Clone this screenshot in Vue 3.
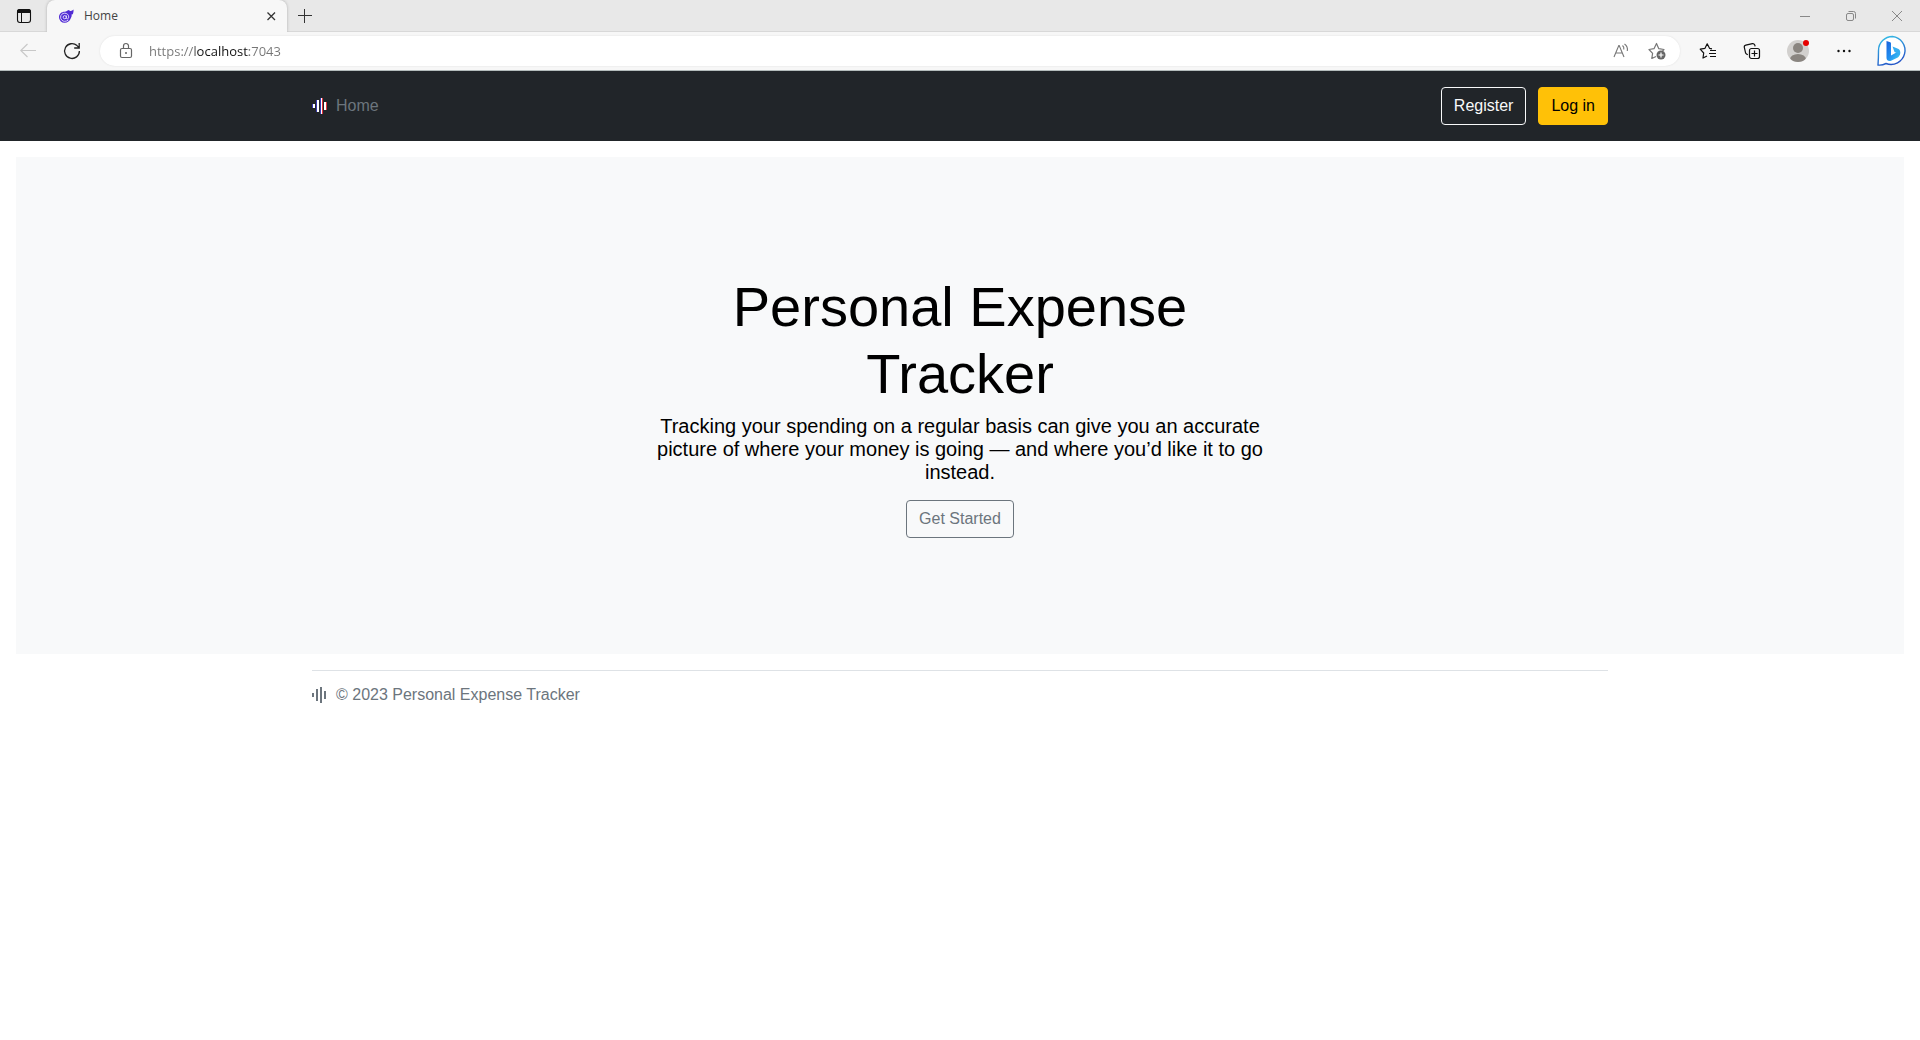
<script setup>
import { ref } from 'vue'

const address = ref('https://localhost:7043')
const year = 2023
const product = 'Personal Expense Tracker'
</script>

<template>
  <div class="window">
    <div class="tab-strip">
      <button class="cell workspace" aria-label="Tab actions">
        <svg width="16" height="16" viewBox="0 0 16 16">
          <rect x="1.500" y="1.500" width="13" height="13" rx="2.500" fill="none" stroke="#111" stroke-width="1.100" />
          <path d="M1 5V3.500A2.500 2.500 0 0 1 3.500 1h9A2.500 2.500 0 0 1 15 3.500V5z" fill="#111" />
          <path d="M5.500 5v9.500" stroke="#111" />
        </svg>
      </button>
      <div class="tab">
        <svg width="16" height="16" viewBox="0 0 16 16">
          <path d="M15.500 1.500c.2 1.800-.1 3.400-.8 5-.4-.2-.7-.3-1-.2.2 1.300-.1 2.700-.9 4-1.100 2.800-3.300 4.500-6.200 4.500A5.600 5.600 0 0 1 1 9.200c0-3.200 2.500-5.400 5.700-5.400 1.800 0 2.600-1.600 4.600-1.800.2.300.3.600.2 1 1.500 0 2.700-.5 4-1.500z" fill="#512bd4" />
          <path d="M10.300 12c-1 .9-2.200 1.300-3.600 1.300a4 4 0 0 1-4.100-4.100c0-2.300 1.800-4 4.100-4s4 1.500 4 3.700c0 1.300-.6 2-1.300 2s-1-.5-1-1.200V7.500" fill="none" stroke="#efeaff" stroke-width=".9" />
          <circle cx="6.700" cy="9.200" r="1.600" fill="none" stroke="#efeaff" stroke-width=".9" />
        </svg>
        <span class="tab-title">Home</span>
        <button class="tab-close" aria-label="Close tab">
          <svg width="10" height="10" viewBox="0 0 10 10"><path d="M1.500 1.500l7.500 7.500M9 1.500L1.500 9" stroke="#333" stroke-width="1.300" /></svg>
        </button>
      </div>
      <button class="cell new-tab" aria-label="New tab">
        <svg width="14" height="14" viewBox="0 0 14 14"><path d="M6.500 0v14M0 6.500h14" stroke="#333" /></svg>
      </button>
      <div class="window-controls">
        <button class="cell" aria-label="Minimize">
          <svg width="10" height="10" viewBox="0 0 10 10"><path d="M0 5.500h10" stroke="#888" /></svg>
        </button>
        <button class="cell" aria-label="Restore">
          <svg width="10" height="10" viewBox="0 0 10 10" fill="none" stroke="#888"><rect x=".5" y="2.500" width="7" height="7" rx="1.500" /><path d="M2.500 .5h5a2 2 0 0 1 2 2v5" /></svg>
        </button>
        <button class="cell" aria-label="Close">
          <svg width="10" height="10" viewBox="0 0 10 10"><path d="M0 0l10 10M10 0L0 10" stroke="#888" /></svg>
        </button>
      </div>
    </div>

    <div class="toolbar">
      <button class="cell" aria-label="Back" disabled>
        <svg width="16" height="16" viewBox="0 0 16 16" fill="none" stroke="#c8c8c8" stroke-width="1.200"><path d="M7.500 1L.8 7.500l6.700 6.500M1 7.500h15" /></svg>
      </button>
      <button class="cell" aria-label="Refresh">
        <svg width="18" height="18" viewBox="0 0 18 18" fill="none" stroke="#222" stroke-width="1.300"><path d="M16.400 9A7.400 7.400 0 1 1 14 3.600L16 5.600M16.200 1v5h-5" /></svg>
      </button>
      <div class="address">
        <svg width="16" height="18" viewBox="0 0 16 18" fill="none" stroke="#666" stroke-width="1.200">
          <rect x="2.500" y="6.500" width="11" height="9" rx="1.500" />
          <path d="M5.500 6.500V4a2.500 2.500 0 0 1 5 0v2.500" />
          <circle cx="8" cy="11" r="1" fill="#666" stroke="none" />
        </svg>
        <input v-model="address" class="url" type="text" aria-label="Address" spellcheck="false" />
        <button class="cell" aria-label="Read aloud">
          <svg width="16" height="16" viewBox="0 0 16 16" fill="none" stroke="#777" stroke-width="1.100">
            <path d="M1 14L5.800 2.500h.4L11 14M2.700 10h6.600M9.500 2.500c1.200 1 1.600 2.500 1.300 4M11.500 1c2.200 1.600 3.300 4.300 2.800 7" />
          </svg>
        </button>
        <button class="cell" aria-label="Add to favorites">
          <svg width="18" height="18" viewBox="0 0 18 18">
            <path d="M8 14.500l-4.200 2 .8-5.200L1 7.500l5-.8L8.500 1.500l2.300 5.200 5.200.8-1.500 1.500" fill="none" stroke="#777" stroke-width="1.200" stroke-linejoin="round" />
            <circle cx="13" cy="13" r="4.500" fill="#666" /><path d="M13 10.500v5M10.500 13h5" stroke="#fff" stroke-width="1.200" />
          </svg>
        </button>
      </div>
      <button class="cell" aria-label="Favorites">
        <svg width="18" height="18" viewBox="0 0 18 18" fill="none" stroke="#111" stroke-width="1.200" stroke-linejoin="round">
          <path d="M8 14L4 16l.7-5L1.200 7.200 6 6.300 8.200 1.800l2.300 4.500 2.500.5M11 8.500h6M10 11.500h7M11 14.500h6" />
        </svg>
      </button>
      <button class="cell" aria-label="Collections">
        <svg width="18" height="18" viewBox="0 0 18 18" fill="none" stroke="#111" stroke-width="1.200">
          <rect x="6.500" y="6.500" width="10" height="10" rx="2" /><path d="M11.500 8.500v6M8.500 11.500h6M4.800 12.800L3.500 12a2 2 0 0 1-1-1.400L1.300 5.500A2 2 0 0 1 2.800 3.200l6.600-1.500a2 2 0 0 1 2.400 1.500l.3 1.200" />
        </svg>
      </button>
      <button class="cell profile" aria-label="Profile">
        <svg width="24" height="24" viewBox="0 0 24 24">
          <defs><clipPath id="avatar"><circle cx="12" cy="12" r="11" /></clipPath></defs>
          <circle cx="12" cy="12" r="11" fill="#d2d0ce" />
          <g clip-path="url(#avatar)" fill="#8a8580"><circle cx="12" cy="9" r="5" /><ellipse cx="12" cy="20.500" rx="8" ry="5.500" /></g>
          <circle cx="20" cy="4" r="3" fill="#e60000" />
        </svg>
      </button>
      <button class="cell" aria-label="Settings and more">
        <svg width="14" height="4" viewBox="0 0 14 4" fill="#111"><circle cx="1.500" cy="2" r="1.200" /><circle cx="7" cy="2" r="1.200" /><circle cx="12.500" cy="2" r="1.200" /></svg>
      </button>
      <button class="cell discover" aria-label="Discover">
        <svg width="32" height="32" viewBox="0 0 32 32">
          <defs>
            <linearGradient id="bubble" x1="0" y1="0" x2=".4" y2="1"><stop offset="0" stop-color="#35c5e8" /><stop offset="1" stop-color="#2457c8" /></linearGradient>
            <linearGradient id="letter" x1="0" y1="0" x2="1" y2="1"><stop offset="0" stop-color="#1a62dc" /><stop offset=".5" stop-color="#218ff0" /><stop offset="1" stop-color="#42cff0" /></linearGradient>
          </defs>
          <path d="M16.500 1.500a14 14 0 1 1-6.500 27Q6 30.500 2 30 2.500 24 2.500 15.500A14 14 0 0 1 16.500 1.500z" fill="#fff" stroke="url(#bubble)" stroke-width="1.400" />
          <path d="M10.500 6l3.800 1.200q.7.300.7 1.200V20.500l8-4.500c1.600 2.600.8 5.200-1.200 6.400L15 25.800c-2.200 1-4.500-.6-4.500-2.800z" fill="url(#letter)" />
          <path d="M16.500 11.500l5.500 2.300c2.800 1.200 2.800 5 1.500 6.600-.5-1.500-1.400-2.200-5-3.500z" fill="#36aef0" />
        </svg>
      </button>
    </div>

    <header class="site-header">
      <div class="container">
        <nav class="nav">
          <a class="brand" href="#" aria-label="Brand">
            <svg width="16" height="16" viewBox="0 0 16 16" fill="#fff">
              <path d="M0 6h3v4H0zM4 2h3v12H4zM8 0h3v16H8zM12 4h3v8h-3z" />
              <path d="M0 6h1v4H0zM4 2h1v12H4zM8 0h1v16H8z" fill="#3838b0" />
              <path d="M10 0h1v16h-1zM14 4h1v8h-1z" fill="#e0303a" />
            </svg>
          </a>
          <a class="nav-link" href="#">Home</a>
        </nav>
        <div class="actions">
          <button class="btn btn-light">Register</button>
          <button class="btn btn-warning">Log in</button>
        </div>
      </div>
    </header>

    <main class="hero">
      <div class="hero-body">
        <h1>{{ product }}</h1>
        <p>Tracking your spending on a regular basis can give you an accurate picture of where your money is going — and where you’d like it to go instead.</p>
        <button class="btn btn-secondary">Get Started</button>
      </div>
    </main>

    <div class="container">
      <footer class="site-footer">
        <svg width="16" height="16" viewBox="0 0 16 16" fill="#6c757d">
          <path d="M0 6h2v4H0zM4 2h2v12H4zM8 0h2v16H8zM12 4h2v8h-2z" />
        </svg>
        <span>© {{ year }} {{ product }}</span>
      </footer>
    </div>
  </div>
</template>

<style>
body {
  background: #fff;
}
</style>

<style scoped>
* {
  box-sizing: border-box;
}

.window {
  font-family: "Liberation Sans", Arial, sans-serif;
  font-size: 16px;
  line-height: 24px;
  color: #000;
}

svg {
  display: block;
  flex: none;
}

button {
  font: inherit;
}

.cell,
.tab-close {
  display: flex;
  align-items: center;
  justify-content: center;
  padding: 0;
  border: 0;
  background: none;
}

.tab-strip {
  display: flex;
  height: 32px;
  background: #e8e8e8;
  box-shadow: inset 0 -1px #d8d8d8;
}

.workspace {
  width: 47px;
}

.tab {
  display: flex;
  align-items: center;
  gap: 10px;
  width: 240px;
  padding: 0 11px;
  border-radius: 8px 8px 0 0;
  background: #f7f7f7;
  box-shadow: 0 0 3px #aaa;
  clip-path: inset(0 -4px 0 -4px);
}

.tab-title {
  flex: 1;
  font: 12px/16px "Open Sans", "Noto Sans", sans-serif;
  color: #444;
}

.new-tab {
  width: 36px;
}

.window-controls {
  display: flex;
  margin-left: auto;
}

.window-controls .cell {
  width: 46px;
}

.toolbar {
  display: flex;
  align-items: center;
  height: 39px;
  padding: 0 2px 0 6px;
  border-bottom: 1px solid #b4bcbc;
  background: #f7f7f7;
}

.toolbar .cell {
  flex: none;
  width: 44px;
  height: 30px;
}

.toolbar .profile {
  width: 48px;
}

.toolbar .discover {
  width: 52px;
}

.address {
  display: flex;
  flex: 1;
  align-items: center;
  height: 30px;
  margin: 0 6px;
  padding: 0 5px 0 18px;
  border-radius: 15px;
  background: #fff;
  box-shadow: 0 0 2px #ddd;
}

.address .cell {
  width: 36px;
}

.url {
  flex: 1;
  min-width: 0;
  height: 20px;
  margin-left: 15px;
  padding: 0;
  border: 0;
  outline: 0;
  background: linear-gradient(90deg, #767676 46px, #111 46px, #111 100px, #767676 100px);
  background-clip: text;
  font: 13px/20px "Open Sans", "Noto Sans", sans-serif;
  color: transparent;
  caret-color: #111;
}

.site-header {
  padding: 16px 0;
  background: #212529;
}

.container {
  display: flex;
  align-items: center;
  justify-content: space-between;
  max-width: 1320px;
  margin: 0 auto;
  padding: 0 12px;
}

.nav,
.actions {
  display: flex;
  align-items: center;
}

.nav {
  gap: 8px;
}

.nav-link {
  color: #6c757d;
  text-decoration: none;
}

.actions {
  gap: 12px;
}

.btn {
  padding: 6px 12px;
  border: 1px solid;
  border-radius: 4px;
  background: transparent;
  line-height: 24px;
}

.btn-light {
  border-color: #f8f9fa;
  color: #f8f9fa;
}

.btn-warning {
  border-color: #ffc107;
  background: #ffc107;
  color: #000;
}

.btn-secondary {
  border-color: #6c757d;
  color: #6c757d;
}

.hero {
  margin: 16px;
  padding: 116px 48px;
  background: #f8f9fa;
  text-align: center;
}

.hero-body {
  max-width: 650px;
  margin: 0 auto;
}

h1 {
  margin: 0 0 8px;
  font-size: 56px;
  font-weight: 400;
  line-height: 67px;
}

p {
  margin: 0 0 16px;
  font-size: 20px;
  line-height: 23px;
}

.site-footer {
  display: flex;
  flex: 1;
  align-items: center;
  gap: 8px;
  padding: 12px 0;
  border-top: 1px solid #dee2e6;
  color: #6c757d;
}
</style>
